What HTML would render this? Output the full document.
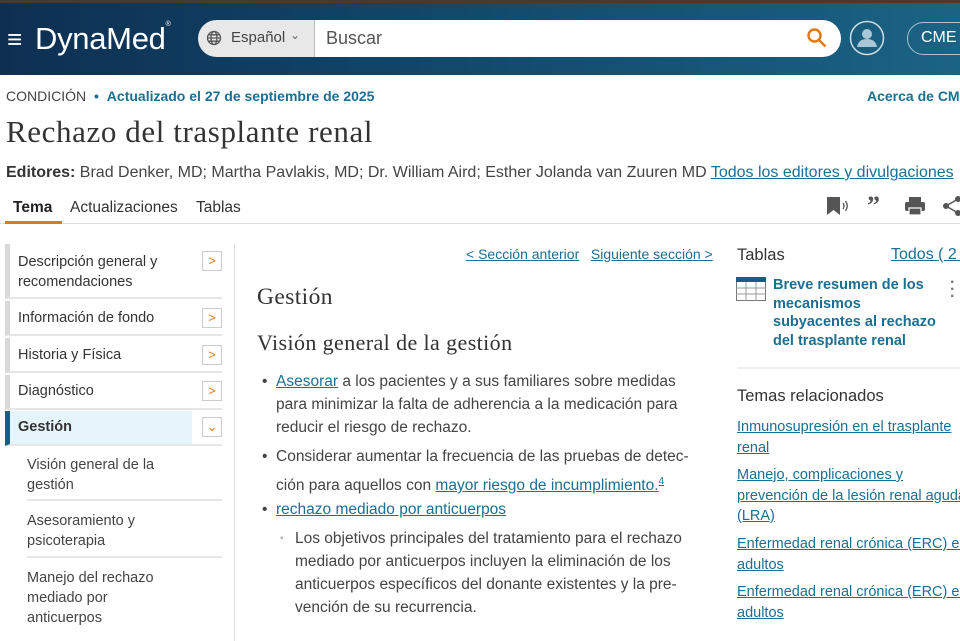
<!DOCTYPE html>
<html><head><meta charset="utf-8"><style>
*{box-sizing:border-box;margin:0;padding:0}
body{width:960px;height:641px;overflow:hidden;background:#fff;font-family:"Liberation Sans",sans-serif;color:#333;position:relative}
.a{position:absolute;white-space:nowrap}
.hdr{position:absolute;left:0;top:0;width:960px;height:75px;background:linear-gradient(90deg,#0d2f52 0%,#124a6c 50%,#1b6384 100%);border-top:3px solid #4a3a2c}
a,.lk{color:#1a6f92;text-decoration:underline}
.serif{font-family:"Liberation Serif",serif;color:#333}
.nav{position:absolute;left:5px;width:217px;border-left:5px solid #d9d9d9;border-bottom:2px solid #e6e6e6;font-size:14.5px;color:#333;padding-left:8px;line-height:20px}
.btn{position:absolute;right:0;width:20px;height:20px;border:1px solid #ccc;color:#e07a10;font-size:13px;text-align:center;line-height:18px}
.sub{position:absolute;left:27px;width:195px;font-size:14.5px;line-height:20px;border-bottom:2px solid #e6e6e6}
.p{font-size:15.5px;line-height:23px;color:#444}
</style></head><body>
<div class="hdr"></div>
<div class="a" style="left:7px;top:26px;color:#fff;font-size:26px;line-height:26px">≡</div>
<div class="a" style="left:35px;top:21px;color:#fff;font-size:31px;font-weight:300;letter-spacing:-0.3px">DynaMed<sup style="font-size:7px;vertical-align:top">®</sup></div>
<div class="a" style="left:198px;top:20px;width:116px;height:37px;background:#e8e8e8;border-radius:19px 0 0 19px"></div>
<svg class="a" style="left:206px;top:30px" width="16" height="16" viewBox="0 0 16 16" fill="none" stroke="#555" stroke-width="1.3"><circle cx="8" cy="8" r="6.5"/><ellipse cx="8" cy="8" rx="3" ry="6.5"/><path d="M1.5 8h13M2.5 4.8h11M2.5 11.2h11"/></svg>
<div class="a" style="left:231px;top:29px;font-size:15px;color:#444">Español</div>
<div class="a" style="left:290px;top:28px;font-size:12px;color:#666">⌄</div>
<div class="a" style="left:314px;top:20px;width:527px;height:37px;background:#fff;border-radius:0 19px 19px 0;border-left:1px solid #bbb"></div>
<div class="a" style="left:326px;top:28px;font-size:18px;color:#555">Buscar</div>
<svg class="a" style="left:806px;top:27px" width="22" height="22" viewBox="0 0 22 22" fill="none" stroke="#e07a10" stroke-width="2.4"><circle cx="8.5" cy="8.5" r="6"/><path d="M13 13l6.5 6.5"/></svg>
<svg class="a" style="left:849px;top:20px" width="36" height="36" viewBox="0 0 36 36"><circle cx="18" cy="18" r="16.5" fill="none" stroke="#cfdde6" stroke-width="1.5"/><circle cx="18" cy="14" r="5" fill="#a9c7d6"/><path d="M8 27c1-6 5-8 10-8s9 2 10 8z" fill="#a9c7d6"/></svg>
<div class="a" style="left:907px;top:22px;width:70px;height:33px;border:1.5px solid #a9c3d0;border-radius:17px;color:#fff;font-size:16px;line-height:30px;padding-left:13px">CME</div>

<div class="a" style="left:6px;top:88px;font-size:14px;color:#444">CONDICIÓN <b style="color:#1a6f92;margin:0 4px">•</b> <b style="color:#1a6f92">Actualizado el 27 de septiembre de 2025</b></div>
<div class="a" style="left:867px;top:88px;font-size:14px;color:#1a6f92;font-weight:bold">Acerca de CME</div>
<div class="a serif" style="left:6px;top:114px;font-size:31px;letter-spacing:0.6px">Rechazo del trasplante renal</div>
<div class="a" style="left:6px;top:164px;font-size:16px;color:#444"><b style="color:#333">Editores:</b> Brad Denker, MD; Martha Pavlakis, MD; Dr. William Aird; Esther Jolanda van Zuuren MD <span class="lk">Todos los editores y divulgaciones</span></div>
<div class="a" style="left:0;top:223px;width:960px;height:1px;background:#ddd"></div>
<div class="a" style="left:13px;top:199px;font-size:15.5px;color:#222;font-weight:bold">Tema</div>
<div class="a" style="left:5px;top:221px;width:57px;height:3px;background:#e07a10"></div>
<div class="a" style="left:70px;top:199px;font-size:15.5px;color:#333">Actualizaciones</div>
<div class="a" style="left:196px;top:199px;font-size:15.5px;color:#333">Tablas</div>
<svg class="a" style="left:826px;top:196px" width="24" height="20" viewBox="0 0 24 20"><path d="M1 1h13v18l-6.5-5L1 19z" fill="#555"/><path d="M17 7q2 3 0 6M19.5 5q3.5 5 0 10" stroke="#555" fill="none" stroke-width="1.3"/></svg>
<div class="a" style="left:867px;top:191px;font-size:26px;font-weight:bold;color:#555;font-family:'Liberation Serif',serif">”</div>
<svg class="a" style="left:904px;top:196px" width="22" height="20" viewBox="0 0 22 20" fill="#555"><rect x="5" y="1" width="12" height="5"/><rect x="1" y="6" width="20" height="9" rx="2"/><rect x="5" y="12" width="12" height="7" fill="#555" stroke="#fff" stroke-width="1.2"/></svg>
<svg class="a" style="left:942px;top:195px" width="18" height="22" viewBox="0 0 18 22" fill="#555"><circle cx="16" cy="4" r="3"/><circle cx="4" cy="11" r="3"/><circle cx="16" cy="18" r="3"/><path d="M16 4L4 11l12 7" stroke="#555" stroke-width="1.5" fill="none"/></svg>

<div class="nav" style="top:244px;height:55px;padding-top:8px">Descripción general y<br>recomendaciones<div class="btn" style="top:7px">&gt;</div></div>
<div class="nav" style="top:301px;height:35px;padding-top:7px">Información de fondo<div class="btn" style="top:7px">&gt;</div></div>
<div class="nav" style="top:338px;height:35px;padding-top:7px">Historia y Física<div class="btn" style="top:7px">&gt;</div></div>
<div class="nav" style="top:375px;height:35px;padding-top:6px">Diagnóstico<div class="btn" style="top:6px">&gt;</div></div>
<div class="nav" style="top:411px;height:35px;padding-top:6px;border-left-color:#1b5d80;font-weight:bold;background:linear-gradient(90deg,#e6f5fb 0,#e6f5fb 182px,#fff 182px)">Gestión<div class="btn" style="top:6px;font-weight:normal">⌄</div></div>
<div class="sub" style="top:455px;height:46px;color:#444">Visión general de la<br>gestión</div>
<div class="sub" style="top:511px;height:47px;color:#444">Asesoramiento y<br>psicoterapia</div>
<div class="sub" style="top:568px;height:70px;border:none;color:#444">Manejo del rechazo<br>mediado por<br>anticuerpos</div>
<div class="a" style="left:234px;top:244px;width:1px;height:397px;background:#ddd"></div>

<div class="a" style="left:466px;top:246px;font-size:14px"><span class="lk">&lt; Sección anterior</span>&nbsp;&nbsp;&nbsp;<span class="lk">Siguiente sección &gt;</span></div>
<div class="a serif" style="left:257px;top:284px;font-size:23.5px;letter-spacing:0.4px">Gestión</div>
<div class="a serif" style="left:257px;top:330px;font-size:22px;letter-spacing:0.4px">Visión general de la gestión</div>
<div class="a p" style="left:276px;top:370px">
<span class="a" style="left:-14px;top:0">•</span><span class="lk">Asesorar</span> a los pacientes y a sus familiares sobre medidas<br>para minimizar la falta de adherencia a la medicación para<br>reducir el riesgo de rechazo.</div>
<div class="a p" style="left:276px;top:444px;line-height:25px">
<span class="a" style="left:-14px;top:0">•</span>Considerar aumentar la frecuencia de las pruebas de detec-<br>ción para aquellos con <span class="lk">mayor riesgo de incumplimiento.</span><sup class="lk" style="font-size:10px">4</sup></div>
<div class="a p" style="left:276px;top:498px">
<span class="a" style="left:-14px;top:0">•</span><span class="lk">rechazo mediado por anticuerpos</span></div>
<div class="a p" style="left:295px;top:527px">
<span class="a" style="left:-15px;top:0;font-size:10px">◦</span>Los objetivos principales del tratamiento para el rechazo<br>mediado por anticuerpos incluyen la eliminación de los<br>anticuerpos específicos del donante existentes y la pre-<br>vención de su recurrencia.</div>

<div class="a" style="left:737px;top:246px;font-size:16.5px;color:#333">Tablas</div>
<div class="a lk" style="left:891px;top:246px;font-size:16px">Todos ( 2 )</div>
<svg class="a" style="left:736px;top:277px" width="30" height="24" viewBox="0 0 30 24"><rect x="0.5" y="0.5" width="29" height="23" fill="#fff" stroke="#777"/><rect x="0" y="0" width="30" height="5" fill="#1b5d80"/><path d="M0 11h30M0 17h30M10 5v19M20 5v19" stroke="#999"/></svg>
<div class="a" style="left:773px;top:276px;font-size:14.5px;line-height:18.5px;color:#1a6f92;font-weight:bold">Breve resumen de los<br>mecanismos<br>subyacentes al rechazo<br>del trasplante renal</div>
<div class="a" style="left:950px;top:279px;font-size:16px;color:#777;line-height:7px;font-weight:bold">·<br>·<br>·</div>
<div class="a" style="left:737px;top:367px;width:223px;height:2px;background:#eee"></div>
<div class="a" style="left:737px;top:387px;font-size:16.5px;color:#333">Temas relacionados</div>
<div class="a lk" style="left:737px;top:417px;font-size:14.5px;line-height:20.5px">Inmunosupresión en el trasplante<br>renal</div>
<div class="a lk" style="left:737px;top:465px;font-size:14.5px;line-height:20.5px">Manejo, complicaciones y<br>prevención de la lesión renal aguda<br>(LRA)</div>
<div class="a lk" style="left:737px;top:534px;font-size:14.5px;line-height:20.5px">Enfermedad renal crónica (ERC) en<br>adultos</div>
<div class="a lk" style="left:737px;top:582px;font-size:14.5px;line-height:20.5px">Enfermedad renal crónica (ERC) en<br>adultos</div>
</body></html>
